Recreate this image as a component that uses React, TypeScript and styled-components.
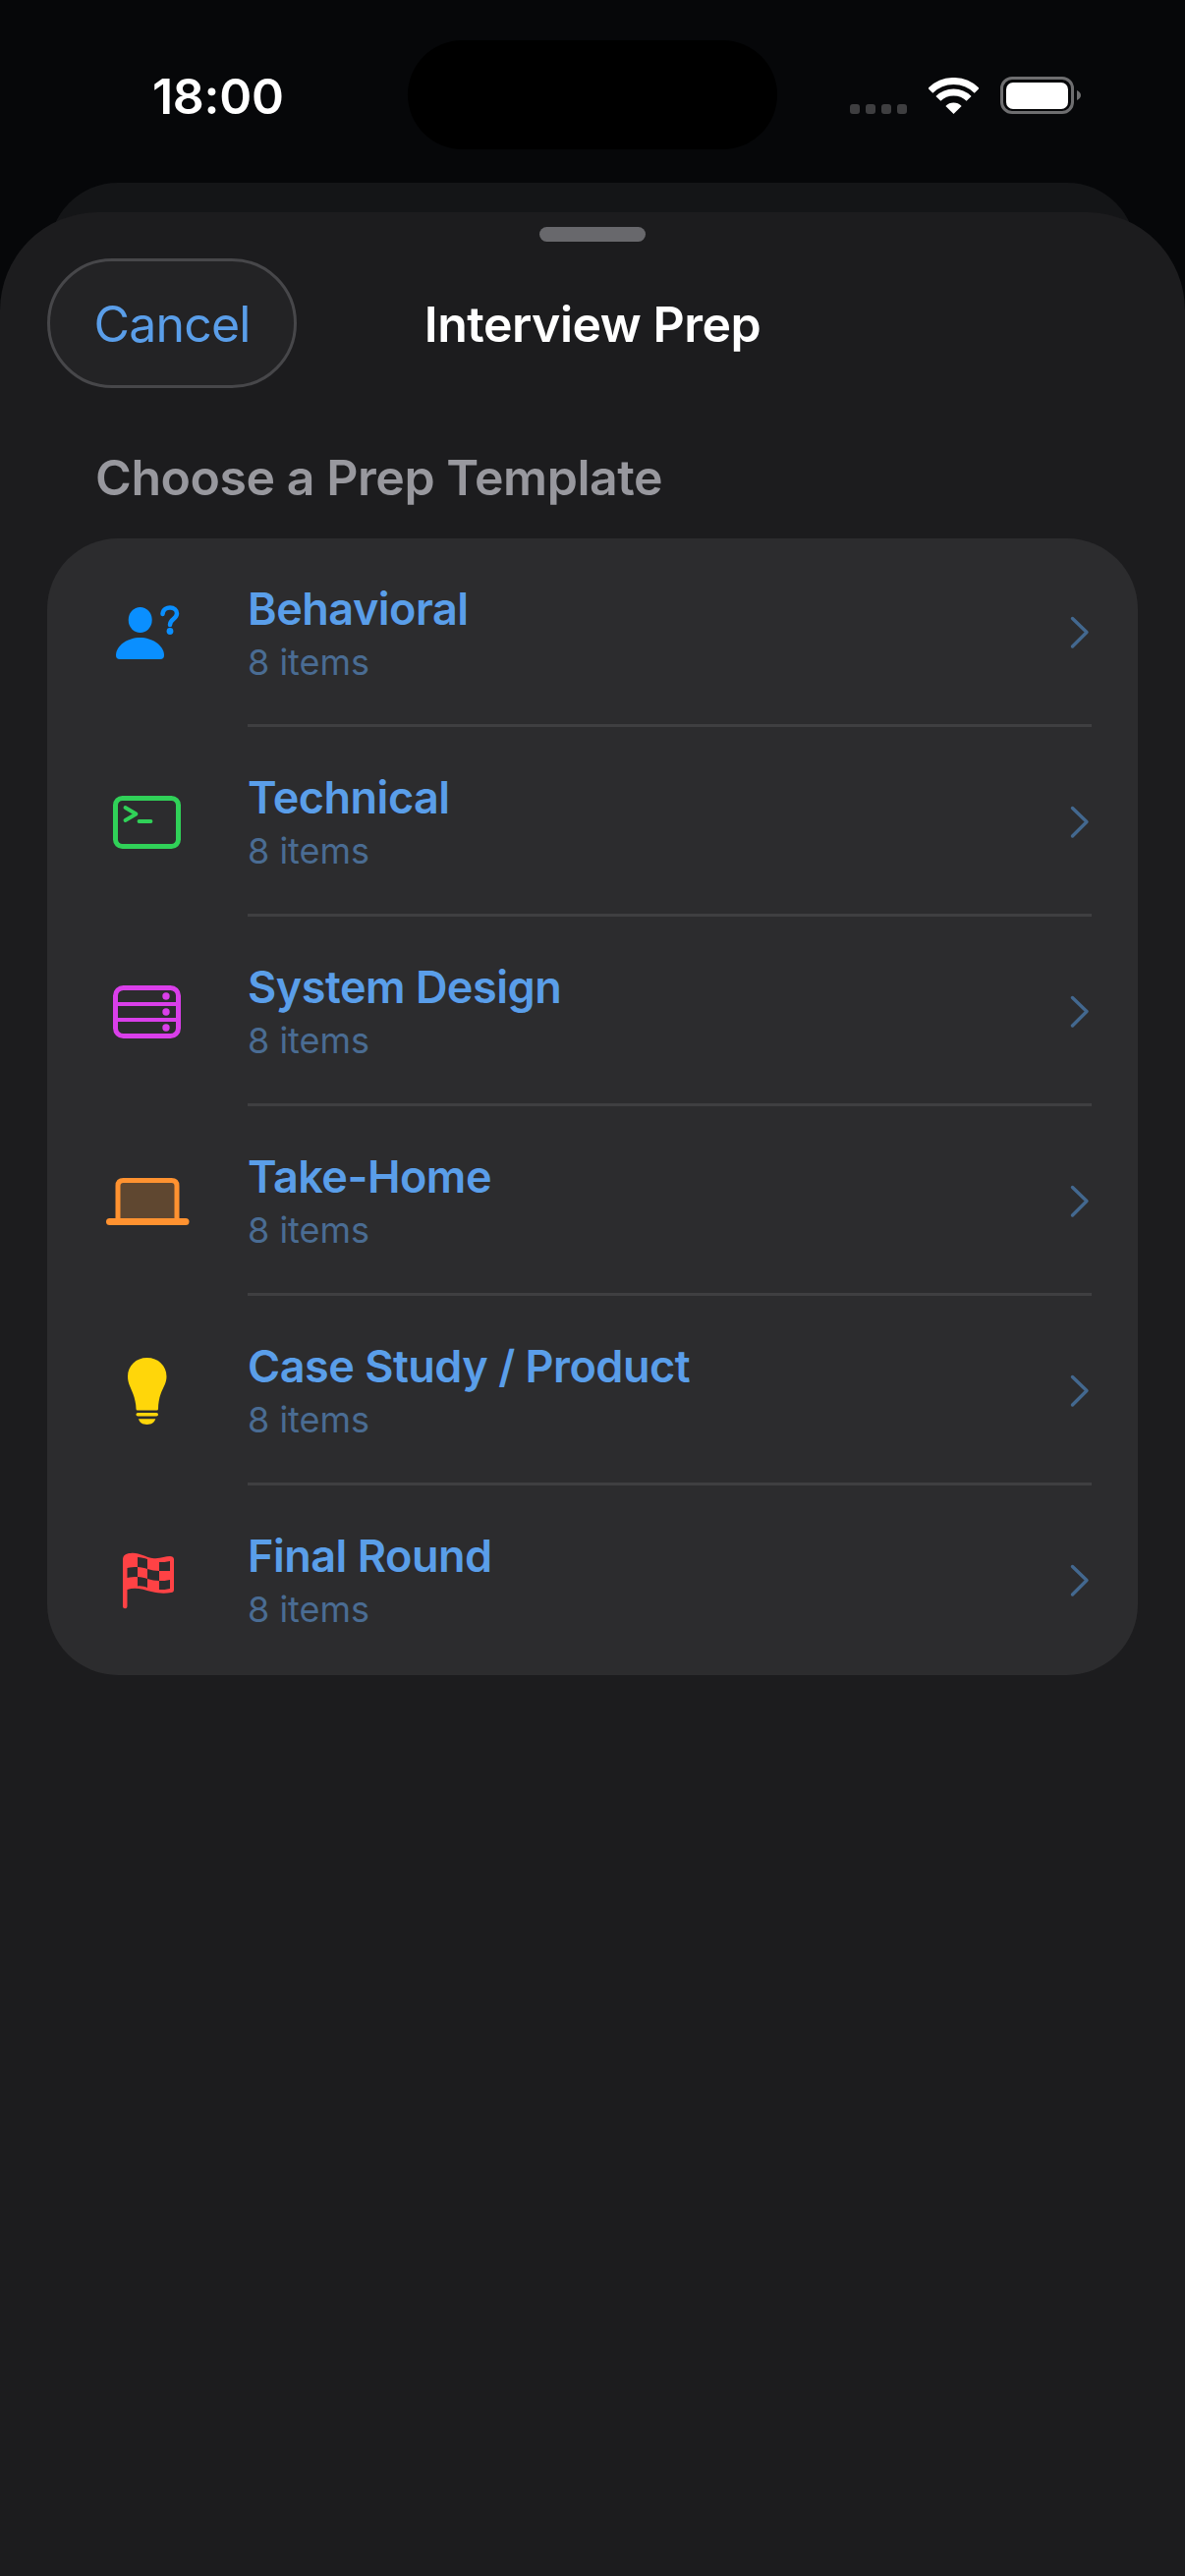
import React from 'react';
import styled, { createGlobalStyle } from 'styled-components';

const GlobalStyle = createGlobalStyle`
  html, body {
    margin: 0;
    padding: 0;
    background: #060709;
  }
  * {
    box-sizing: border-box;
  }
`;

const templates = [
  { name: 'Behavioral', icon: <PersonQuestion /> },
  { name: 'Technical', icon: <Terminal /> },
  { name: 'System Design', icon: <Server /> },
  { name: 'Take-Home', icon: <Laptop /> },
  { name: 'Case Study / Product', icon: <Bulb /> },
  { name: 'Final Round', icon: <Flag /> },
];

function PersonQuestion() {
  return (
    <IconSvg viewBox="0 0 100 80">
      <ellipse cx="42.7" cy="28" rx="12" ry="13" fill="#0a8fff" />
      <path
        d="M18 64 C18 54 30 46 42.5 46 C55 46 67 54 67 64 Q67 68 63 68 H22 Q18 68 18 64Z"
        fill="#0a8fff"
      />
      <path
        d="M65.5 22 C66 17 70 15.5 73 15.5 C77 15.5 80 18 80 21.5 C80 27 73 27 73 33"
        fill="none"
        stroke="#0a8fff"
        strokeWidth="4.5"
        strokeLinecap="round"
      />
      <circle cx="73" cy="39.5" r="3.4" fill="#0a8fff" />
    </IconSvg>
  );
}

function Terminal() {
  return (
    <IconSvg viewBox="0 0 100 80">
      <g fill="none" stroke="#30d158" strokeLinecap="round" strokeLinejoin="round">
        <rect x="17.5" y="16.5" width="64" height="49" rx="7" strokeWidth="5" />
        <path d="M27.5 26 L38.5 32.5 L27.5 39" strokeWidth="3.8" />
        <path d="M41.5 40 H53.5" strokeWidth="3.8" />
      </g>
    </IconSvg>
  );
}

function Server() {
  return (
    <IconSvg viewBox="0 0 100 80">
      <g fill="none" stroke="#da3fea">
        <rect x="17.5" y="16.5" width="64" height="49" rx="8" strokeWidth="5" />
        <path d="M17.5 33 H81.5 M17.5 49 H81.5" strokeWidth="4" />
      </g>
      <g fill="#da3fea">
        <circle cx="69" cy="25" r="3.7" />
        <circle cx="69" cy="41" r="3.7" />
        <circle cx="69" cy="57" r="3.7" />
      </g>
    </IconSvg>
  );
}

function Laptop() {
  return (
    <IconSvg viewBox="0 0 100 80">
      <path
        d="M20 60 V25 Q20 19.5 25.5 19.5 H74.5 Q80 19.5 80 25 V60"
        fill="#5f4730"
        stroke="#ff9230"
        strokeWidth="5"
      />
      <path d="M11.5 61.5 H89" stroke="#ff9230" strokeWidth="7" strokeLinecap="round" />
    </IconSvg>
  );
}

function Bulb() {
  return (
    <IconSvg viewBox="0 0 100 80">
      <g fill="#ffd60a">
        <path d="M49.6 7 C61 7 69.5 15 69.5 26 C69.5 33 66 37 63.5 44 C62 48 61 54 61 59 Q61 60.5 59.5 60.5 H40 Q38.5 60.5 38.5 59 C38.5 54 37 48 35.5 44 C33 37 30 33 30 26 C30 15 38.5 7 49.6 7Z" />
        <rect x="38.5" y="63" width="22.5" height="3.6" rx="1.8" />
        <path d="M41 69.3 H58.3 C57 73 54 75 49.6 75 C45 75 42 73 41 69.3Z" />
      </g>
    </IconSvg>
  );
}

function Flag() {
  return (
    <IconSvg viewBox="0 0 100 80">
      <path
        d="M25 20 C25 15 28 13 33 13 C42 12 47 17 55 18 C63 19 68 16 73 16 C75 16 77 17 77 19 V50 C77 52 76 53 74 53 C68 54 62 54 54 52 C46 50 38 47 29.5 50 V67 C29.5 70 25 70 25 67 Z"
        fill="#ff4245"
      />
      <g fill="#2c2c2e">
        <path d="M40 17 C44 17 47 18 50 19 V29 C47 28 44 27 40 27Z" />
        <path d="M29.5 28 C33 27 36 27 40 27 V37 C36 37 33 37 29.5 38Z" />
        <path d="M50 29 C54 30 58 31 62 31 V41 C58 41 54 40 50 39Z" />
        <path d="M62 22 C66 22 69 22 73 21 V31 C69 31 66 31 62 31Z" />
        <path d="M40 37 C44 37 47 38 50 39 V48 C47 47 44 46 40 46.5Z" />
        <path d="M62 41 C66 41 69 41 73 40 V49 C69 50 66 50 62 50Z" />
      </g>
    </IconSvg>
  );
}

function Chevron() {
  return (
    <ChevronSvg viewBox="0 0 20 34">
      <path
        d="M2.5 2.5 L17 16.5 L2.5 31"
        fill="none"
        stroke="#43688f"
        strokeWidth="3.4"
        strokeLinecap="round"
        strokeLinejoin="round"
      />
    </ChevronSvg>
  );
}

const App = () => {
  return (
    <Page>
      <GlobalStyle />
      <StatusBar>
        <Time>18:00</Time>
        <Island />
        <StatusIcons>
          <SignalDots>
            <SignalDot />
            <SignalDot />
            <SignalDot />
            <SignalDot />
          </SignalDots>
          <svg width="51" height="37" viewBox="0 0 51 37">
            <g fill="none" stroke="#fff" strokeWidth="7">
              <path d="M1.8 13.3 A33.5 33.5 0 0 1 49.2 13.3" />
              <path d="M9.9 21.4 A22 22 0 0 1 41.1 21.4" />
            </g>
            <path d="M17.4 28.9 A11.5 11.5 0 0 1 33.6 28.9 L25.5 37Z" fill="#fff" />
          </svg>
          <svg width="82" height="38" viewBox="0 0 82 38">
            <rect x="1.5" y="1.5" width="72" height="35" rx="10.5" fill="none" stroke="#6e6e70" strokeWidth="3" />
            <rect x="6" y="6" width="63" height="27" rx="7" fill="#fff" />
            <path d="M78 14 Q82 16 82 19 Q82 22 78 24Z" fill="#6e6e70" />
          </svg>
        </StatusIcons>
      </StatusBar>

      <BackSheet />

      <Sheet>
        <Grabber />
        <Header>
          <CancelButton>Cancel</CancelButton>
          <Title>Interview Prep</Title>
        </Header>

        <SectionTitle>Choose a Prep Template</SectionTitle>

        <Card>
          {templates.map(item => (
            <Row key={item.name}>
              <IconSlot>{item.icon}</IconSlot>
              <RowBody>
                <RowText>
                  <RowName>{item.name}</RowName>
                  <RowCount>8 items</RowCount>
                </RowText>
                <Chevron />
              </RowBody>
            </Row>
          ))}
        </Card>
      </Sheet>
    </Page>
  );
};

export default App;

const Page = styled.div`
  width: 1206px;
  height: 2622px;
  overflow: hidden;
  display: flex;
  flex-direction: column;
  background: #060709;
  font-family: Inter, 'Liberation Sans', sans-serif;
`;

const StatusBar = styled.div`
  height: 186px;
  flex-shrink: 0;
  display: grid;
  grid-template-columns: 415px 376px 1fr;
  align-items: start;
`;

const Time = styled.div`
  padding: 68px 0 0 155px;
  font-size: 50px;
  line-height: 60px;
  font-weight: 600;
  letter-spacing: -0.3px;
  color: #fff;
`;

const Island = styled.div`
  margin-top: 41px;
  height: 111px;
  border-radius: 56px;
  background: #000;
`;

const StatusIcons = styled.div`
  height: 116px;
  padding-left: 74px;
  display: flex;
  align-items: flex-end;
  gap: 22px;
`;

const SignalDots = styled.div`
  display: flex;
  gap: 6px;
`;

const SignalDot = styled.span`
  width: 10px;
  height: 10px;
  border-radius: 3px;
  background: #3e3e40;
`;

const BackSheet = styled.div`
  height: 70px;
  flex-shrink: 0;
  margin: 0 50px -40px;
  border-radius: 80px 80px 0 0;
  background: #141517;
`;

const Sheet = styled.div`
  position: relative;
  flex: 1;
  padding: 15px 48px 0;
  border-radius: 100px 100px 0 0;
  background: #1c1c1e;
`;

const Grabber = styled.div`
  width: 108px;
  height: 15px;
  margin: 0 auto;
  border-radius: 8px;
  background: #68686c;
`;

const Header = styled.div`
  margin-top: 17px;
  display: grid;
  grid-template-columns: 1fr auto 1fr;
  align-items: center;
`;

const CancelButton = styled.button`
  width: 254px;
  height: 132px;
  padding: 2px 0 0;
  border: 3px solid #47474a;
  border-radius: 66px;
  background: #232325;
  color: #5a9ee9;
  font-family: inherit;
  font-size: 50px;
  font-weight: 400;
  letter-spacing: -0.8px;
`;

const Title = styled.div`
  padding-top: 2px;
  font-size: 50px;
  font-weight: 600;
  letter-spacing: -0.5px;
  color: #fff;
`;

const SectionTitle = styled.div`
  margin: 61px 0 32px 49px;
  font-size: 50px;
  line-height: 60px;
  font-weight: 600;
  letter-spacing: -0.45px;
  color: #98989e;
`;

const Card = styled.div`
  width: 1110px;
  height: 1157px;
  border-radius: 72px;
  background: #2c2c2e;
  overflow: hidden;
`;

const Row = styled.div`
  height: 193px;
  display: flex;
  align-items: stretch;

  &:first-child {
    height: 192px;
  }
`;

const IconSlot = styled.div`
  width: 204px;
  flex-shrink: 0;
  padding: 0 0 2px 52px;
  display: flex;
  align-items: center;
`;

const IconSvg = styled.svg`
  width: 100px;
  height: 80px;
  display: block;
`;

const RowBody = styled.div`
  flex: 1;
  margin-right: 47px;
  padding-right: 2px;
  display: flex;
  align-items: center;
  justify-content: space-between;
  box-shadow: inset 0 -3px 0 #3f3f41;

  ${Row}:last-child & {
    box-shadow: none;
  }
`;

const RowText = styled.div`
  display: flex;
  flex-direction: column;
  gap: 5px;
`;

const RowName = styled.div`
  font-size: 45px;
  line-height: 54px;
  font-weight: 600;
  letter-spacing: -0.5px;
  color: #5a9ee9;
`;

const RowCount = styled.div`
  font-size: 36px;
  line-height: 44px;
  color: #4a6c93;
`;

const ChevronSvg = styled.svg`
  width: 20px;
  height: 34px;
  display: block;
`;
